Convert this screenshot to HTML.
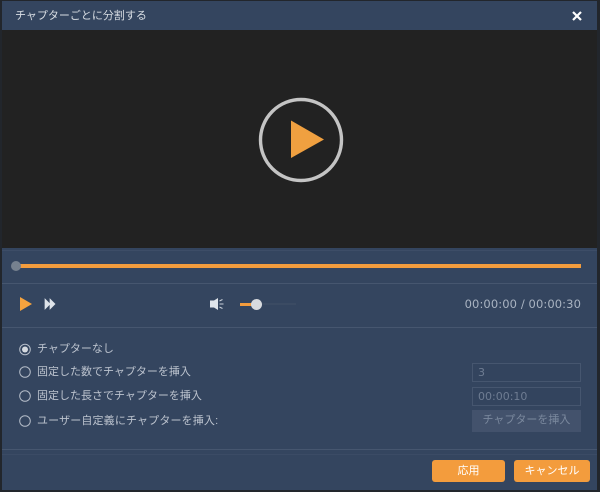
<!DOCTYPE html>
<html lang="ja">
<head>
<meta charset="utf-8">
<style>
html,body{margin:0;padding:0;background:#22262c;}
body{width:600px;height:492px;position:relative;overflow:hidden;font-family:"Liberation Sans","Noto Sans CJK JP",sans-serif;}
#w{position:absolute;left:0;top:0;width:600px;height:492px;filter:blur(.3px);}
.a{position:absolute;}
.t{position:absolute;white-space:nowrap;font-size:11px;line-height:14px;color:#bcc3ce;}
.line{position:absolute;left:2px;width:595px;height:1px;background:#46566f;}
.box{position:absolute;left:472px;width:107px;height:17px;border:1px solid #46566f;background:#33445e;color:#6e7c92;font-family:"DejaVu Sans",sans-serif;font-size:11px;line-height:17px;text-indent:5px;}
.btn{position:absolute;top:460px;height:22px;background:#f39c3d;border-radius:3px;color:#fff;font-size:11px;line-height:22px;text-align:center;}
</style>
</head>
<body>
<div id="w">
<div class="a" style="left:2px;top:1px;width:595px;height:489px;background:#34455f;"></div>
<div class="a" style="left:2px;top:30px;width:595px;height:218px;background:#222222;"></div>
<div class="t" style="left:15px;top:9px;color:#d8dde3;font-size:11px;">チャプターごとに分割する</div>
<svg class="a" style="left:570px;top:9px;" width="14" height="14" viewBox="0 0 14 14"><path d="M3 3L11 11M11 3L3 11" stroke="#fff" stroke-width="2.2" fill="none"/></svg>

<svg class="a" style="left:255.5px;top:95px;" width="90" height="90" viewBox="0 0 90 90">
<circle cx="45" cy="45" r="40.5" fill="none" stroke="#c4c4c4" stroke-width="3.4"/>
<path d="M35 25.5L68 44.5L35 63Z" fill="#f0a040"/>
</svg>

<div class="line" style="top:250px;opacity:.5;"></div>
<div class="a" style="left:16px;top:264px;width:565px;height:4px;background:#f39c3d;"></div>
<div class="a" style="left:11px;top:260.5px;width:10px;height:10px;border-radius:50%;background:#76818f;"></div>
<div class="line" style="top:283px;"></div>

<svg class="a" style="left:18px;top:295px;" width="16" height="18" viewBox="0 0 16 18"><path d="M2 2L14 9L2 16Z" fill="#f6a33e"/></svg>
<svg class="a" style="left:44px;top:298px;" width="12" height="12" viewBox="0 0 12 12"><path d="M1 1L6 6L1 11ZM6 1L11 6L6 11Z" fill="#dfe4ea" stroke="#dfe4ea" stroke-width=".7"/></svg>

<svg class="a" style="left:209px;top:297px;" width="16" height="14" viewBox="0 0 16 14">
<path d="M1 3.5H5L9 1V13L5 10.5H1Z" fill="#dfe4ea"/>
<path d="M10.5 4L13.5 2.5M10.5 7H14.5M10.5 10L13.5 11.5" stroke="#c9d0d9" stroke-width="1" fill="none"/>
</svg>
<div class="a" style="left:256px;top:303px;width:40px;height:2px;background:#3b4b63;"></div>
<div class="a" style="left:240px;top:302.5px;width:16px;height:3.5px;background:#f39c3d;"></div>
<div class="a" style="left:250.5px;top:298.5px;width:11px;height:11px;border-radius:50%;background:#d8dbdf;"></div>

<div class="t" style="right:19px;top:297px;color:#a9b3c1;font-family:'DejaVu Sans',sans-serif;font-size:11.5px;letter-spacing:.1px;">00:00:00 / 00:00:30</div>
<div class="line" style="top:327px;"></div>

<svg class="a" style="left:18px;top:342px;" width="14" height="14" viewBox="0 0 14 14"><circle cx="7" cy="7.5" r="5.3" fill="none" stroke="#b4bcc8" stroke-width="1"/><circle cx="7" cy="7.5" r="3" fill="#d5d9df"/></svg>
<svg class="a" style="left:18px;top:365px;" width="14" height="14" viewBox="0 0 14 14"><circle cx="7" cy="7" r="5.3" fill="none" stroke="#b4bcc8" stroke-width="1"/></svg>
<svg class="a" style="left:18px;top:389px;" width="14" height="14" viewBox="0 0 14 14"><circle cx="7" cy="7" r="5.3" fill="none" stroke="#b4bcc8" stroke-width="1"/></svg>
<svg class="a" style="left:18px;top:414px;" width="14" height="14" viewBox="0 0 14 14"><circle cx="7" cy="7" r="5.3" fill="none" stroke="#b4bcc8" stroke-width="1"/></svg>

<div class="t" style="left:37px;top:342px;">チャプターなし</div>
<div class="t" style="left:37px;top:365px;">固定した数でチャプターを挿入</div>
<div class="t" style="left:37px;top:389px;">固定した長さでチャプターを挿入</div>
<div class="t" style="left:37px;top:414px;letter-spacing:.15px;">ユーザー自定義にチャプターを挿入:</div>

<div class="box" style="top:363px;">3</div>
<div class="box" style="top:387px;">00:00:10</div>
<div class="a" style="left:472px;top:410px;width:109px;height:22px;background:#43526c;color:#7b899e;font-size:11px;line-height:21px;text-align:center;">チャプターを挿入</div>

<div class="line" style="top:449px;"></div>
<div class="line" style="top:454px;opacity:.4;"></div>
<div class="btn" style="left:432px;width:73px;">応用</div>
<div class="btn" style="left:514px;width:76px;">キャンセル</div>
</div>
</body>
</html>
